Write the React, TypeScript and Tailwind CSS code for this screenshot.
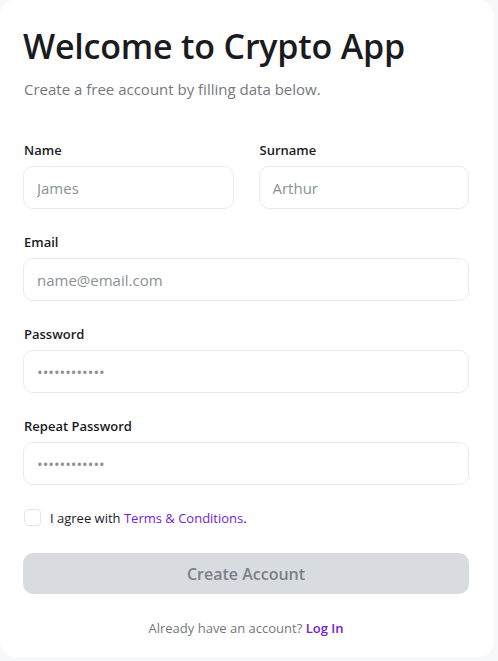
import type { FC } from "react";

const font = { fontFamily: '"Open Sans", "Noto Sans", sans-serif' };

interface FieldProps {
  label: string;
  placeholder: string;
  type?: string;
}

const Field: FC<FieldProps> = ({ label, placeholder, type = "text" }) => (
  <label className="flex flex-col gap-[8px]">
    <span className="pl-px text-[13px] leading-4 font-semibold text-[#1b1b1f]">{label}</span>
    <input
      type={type}
      placeholder={placeholder}
      className="h-[43px] w-full rounded-[10px] border border-[#e8eaed] bg-white px-[13px] text-[15px] text-[#1b1b1f] outline-none placeholder:text-[#8b9096]"
      style={font}
    />
  </label>
);

const App: FC = () => {
  return (
    <div className="min-h-screen bg-[#f7f8f9]" style={font}>
      <div className="flex h-[657px] w-[494px] flex-col rounded-2xl bg-white pl-[23px] pr-[25px] pt-[26px]">
        <h1 className="text-[34px] leading-[40px] font-semibold tracking-[-0.2px] text-[#1b1b1f]">
          Welcome to Crypto App
        </h1>
        <p className="mt-[13px] pl-px text-[15px] leading-5 text-[#74787e]">
          Create a free account by filling data below.
        </p>

        <div className="mt-[43px] flex flex-col gap-[25px]">
          <div className="grid grid-cols-2 gap-[25px]">
            <Field label="Name" placeholder="James" />
            <Field label="Surname" placeholder="Arthur" />
          </div>
          <Field label="Email" placeholder="name@email.com" type="email" />
          <Field label="Password" placeholder="••••••••••••" type="password" />
          <Field label="Repeat Password" placeholder="••••••••••••" type="password" />
        </div>

        <div className="mt-[24px] flex items-center gap-[9px] pl-px">
          <span className="h-[17px] w-[17px] rounded-[4px] border border-[#e4e6ea] bg-white" />
          <span className="text-[13px] leading-4 text-[#1b1b1f]">
            I agree with <span className="text-[#7420d9]">Terms &amp; Conditions</span>.
          </span>
        </div>

        <button
          className="mt-[27px] h-[41px] w-full rounded-[10px] bg-[#d8dce0] text-[16px] font-semibold text-[#7b8088]"
          style={font}
        >
          Create Account
        </button>

        <p className="mt-[26px] text-center text-[13px] leading-4 text-[#74787e]">
          Already have an account? <span className="font-semibold text-[#7420d9]">Log In</span>
        </p>
      </div>
    </div>
  );
};

export default App;
